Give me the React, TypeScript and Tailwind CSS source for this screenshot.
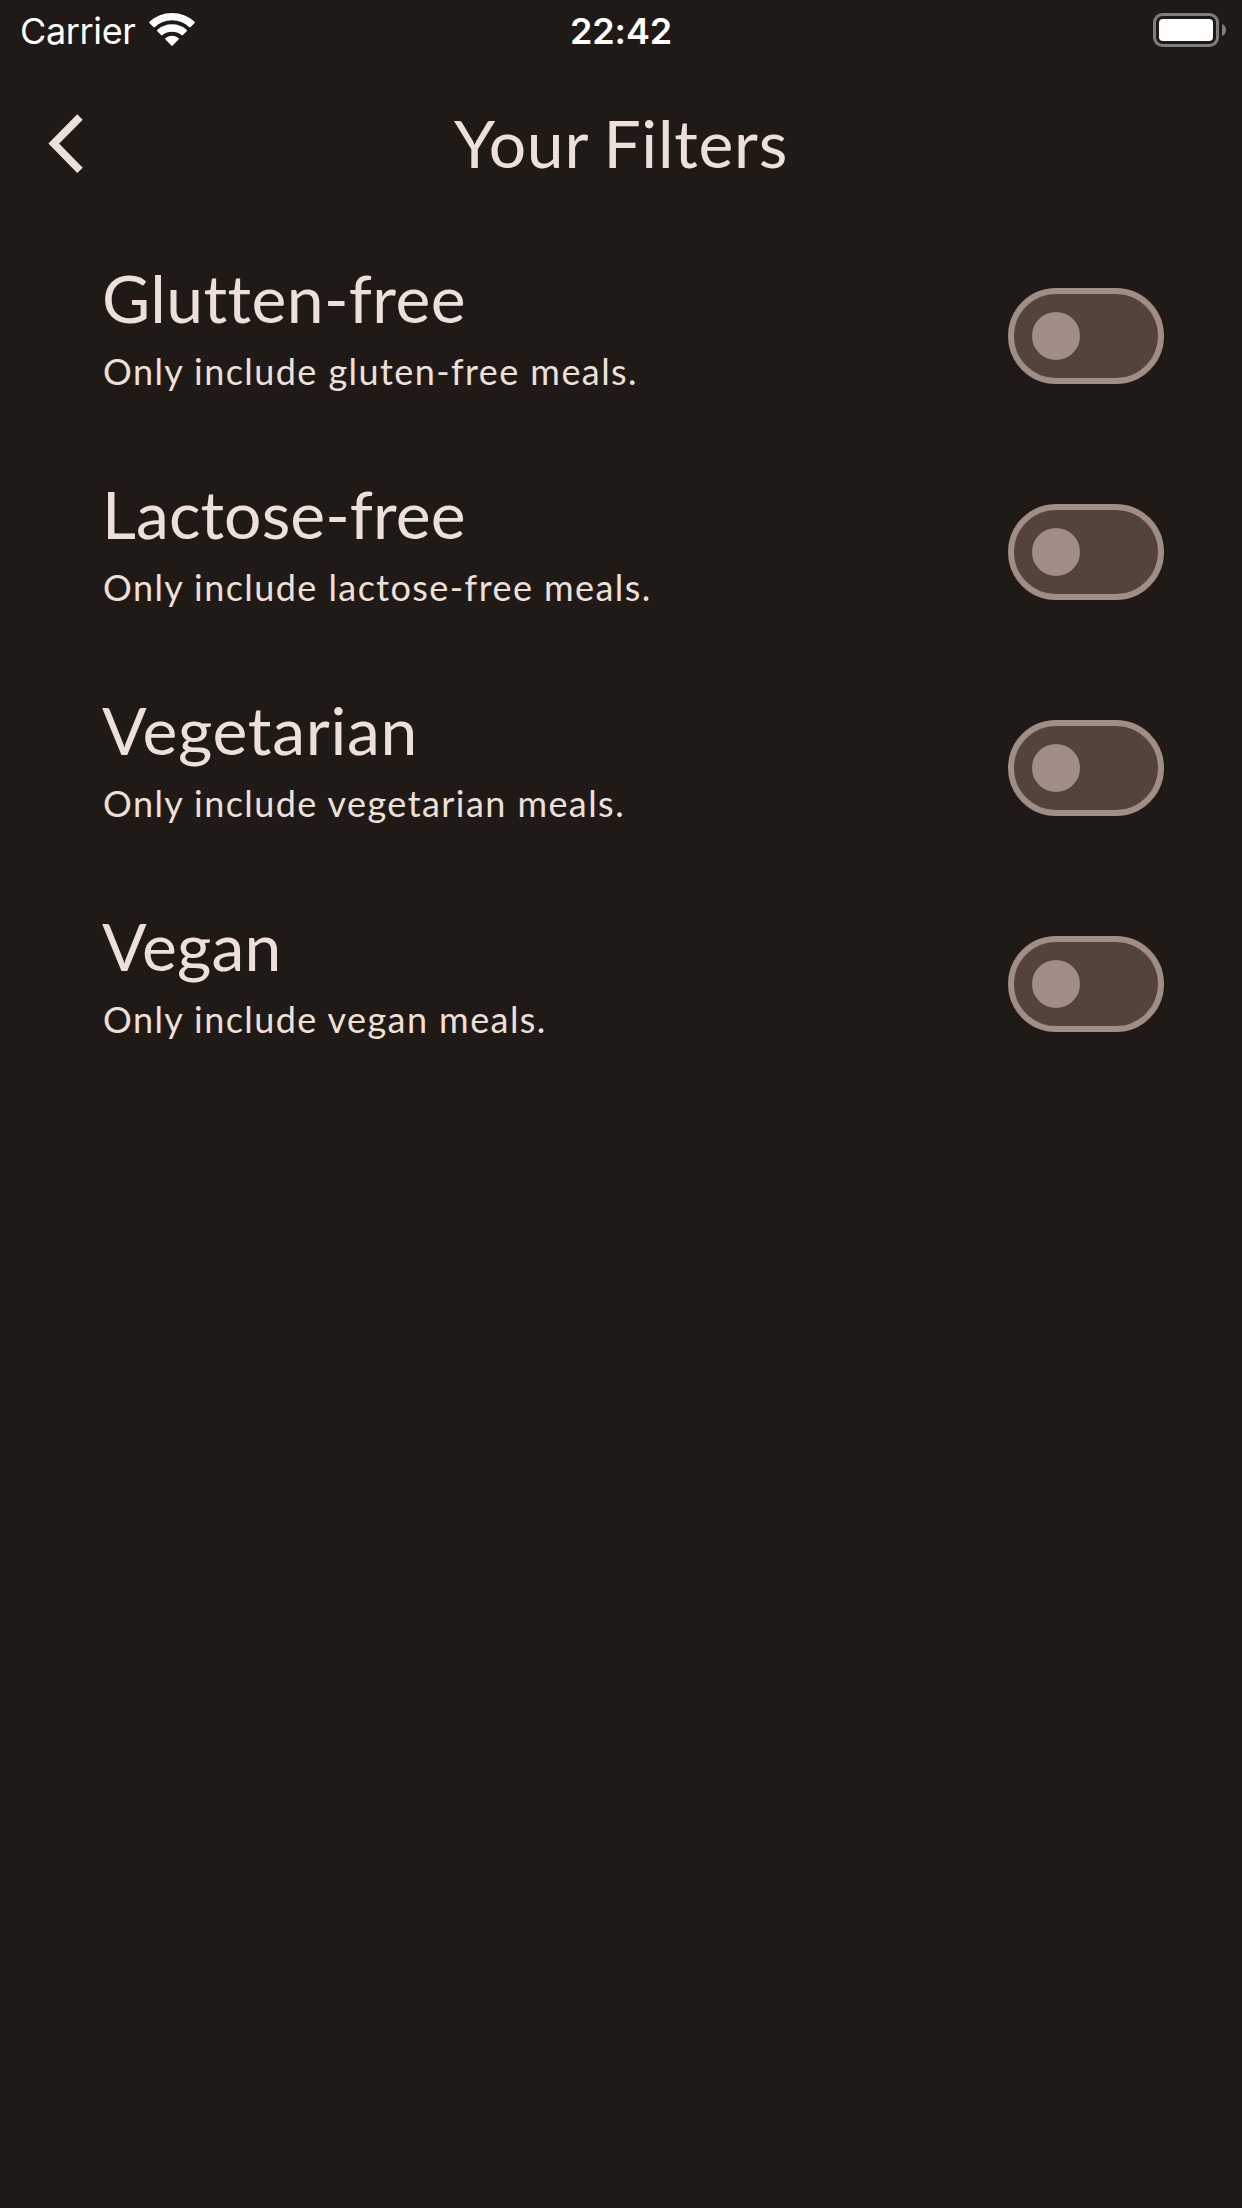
const filters = [
  { title: 'Glutten-free', description: 'Only include gluten-free meals.', tracking: 'tracking-[0.4px]' },
  { title: 'Lactose-free', description: 'Only include lactose-free meals.', tracking: 'tracking-[0.1px]' },
  { title: 'Vegetarian', description: 'Only include vegetarian meals.', tracking: 'tracking-[0.7px]' },
  { title: 'Vegan', description: 'Only include vegan meals.', tracking: 'tracking-[0.2px]' },
];

function StatusBar() {
  return (
    <div className="grid h-[60px] grid-cols-3 items-center font-['Inter',sans-serif] text-[36px] leading-none text-white">
      <div className="flex items-center gap-[13px] pl-5">
        <span className="pt-[2px] tracking-[-0.35px]">Carrier</span>
        <svg width="46" height="34" viewBox="0 0 46 34" fill="white">
          <path d="M16.5 26.4 Q15.7 25.7 16.6 25 Q23 20.5 29.4 25 Q30.3 25.7 29.5 26.4 L23.7 32.5 Q23 33.2 22.3 32.5 Z" />
          <path d="M8.3 18.2 Q7.6 17.4 8.4 16.7 Q14.5 11.2 23 11.2 Q31.5 11.2 37.6 16.7 Q38.4 17.4 37.7 18.2 L33.9 22 Q33.2 22.7 32.4 22 Q28.5 18.7 23 18.7 Q17.5 18.7 13.6 22 Q12.8 22.7 12.1 22 Z" />
          <path d="M0.6 10.3 Q-0.2 9.4 0.7 8.6 Q10 0 23 0 Q36 0 45.3 8.6 Q46.2 9.4 45.4 10.3 L41.6 14 Q40.8 14.7 40 14 Q33 7.3 23 7.3 Q13 7.3 6 14 Q5.2 14.7 4.4 14 Z" />
        </svg>
      </div>
      <span className="pt-[2px] text-center font-semibold tracking-[-0.1px]">22:42</span>
      <div className="flex items-center justify-end pr-[15px]">
        <svg width="74" height="34" viewBox="0 0 74 34">
          <rect x="1.5" y="1.5" width="63" height="31" rx="8" fill="none" stroke="#807d7b" strokeWidth="3" />
          <rect x="6" y="6" width="54" height="22" rx="4" fill="white" />
          <path d="M69 11 Q73 12.5 73 17 Q73 21.5 69 23 Z" fill="#807d7b" />
        </svg>
      </div>
    </div>
  );
}

function FilterRow({ title, description, tracking }: { title: string; description: string; tracking: string }) {
  return (
    <div className="flex h-[216px] items-center justify-between pr-[78px] pl-[103px]">
      <div className="self-start pt-7">
        <h2 className={`-ml-px text-[66px] leading-[84px] [font-variant-ligatures:none] ${tracking}`}>{title}</h2>
        <p className="text-[36px] leading-[62px] tracking-[1.43px]">{description}</p>
      </div>
      <button role="switch" aria-checked="false" aria-label={title} className="flex h-24 w-[156px] items-center rounded-full border-6 border-[#a08d85] bg-[#52443d] pl-[18px]">
        <span className="size-12 rounded-full bg-[#a08d85]" />
      </button>
    </div>
  );
}

export default function App() {
  return (
    <div className="flex h-[2208px] w-[1242px] flex-col bg-[#201a17] font-['Lato',sans-serif] text-[#ede0db]">
      <StatusBar />
      <header className="grid h-[168px] grid-cols-[200px_1fr_200px] items-center">
        <button aria-label="Back" className="pl-[46px]">
          <svg width="40" height="60" viewBox="0 0 40 60" fill="none" stroke="currentColor" strokeWidth="7.7">
            <path d="M34 3 L7.8 29.6 L34 56.4" />
          </svg>
        </button>
        <h1 className="pb-[3px] text-center text-[66px] leading-[84px] tracking-[0.75px] [word-spacing:-2px]">Your Filters</h1>
      </header>
      <main>
        {filters.map((filter) => <FilterRow key={filter.title} {...filter} />)}
      </main>
    </div>
  );
}
